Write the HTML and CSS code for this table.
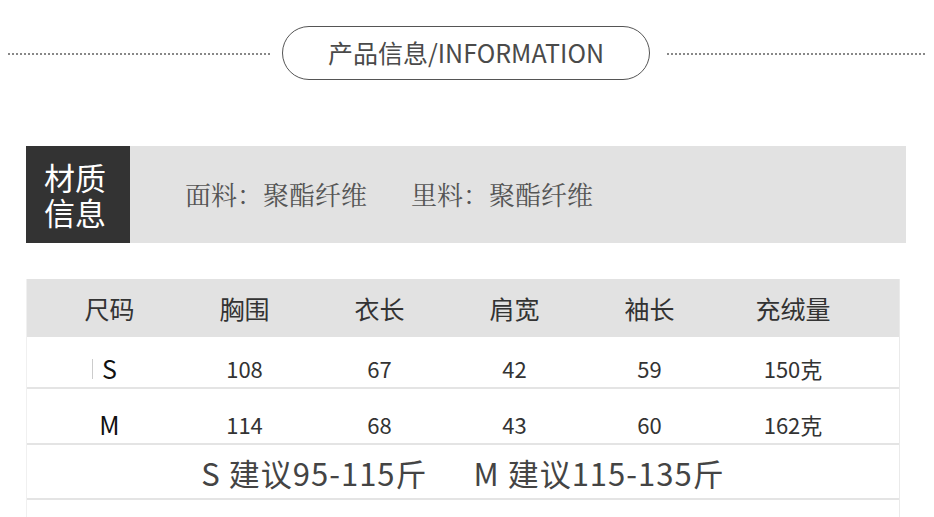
FILE: index.html
```html
<!DOCTYPE html>
<html lang="zh">
<head>
<meta charset="utf-8">
<link rel="stylesheet" href="styles.css">
</head>
<body>
<div class="top">
  <div class="dots dots-left"></div>
  <div class="pill">产品信息/INFORMATION</div>
  <div class="dots dots-right"></div>
</div>
<div class="material">
  <div class="mat-label"><div>材质</div><div>信息</div></div>
  <div class="mat-text"><span>面料：聚酯纤维</span><span>里料：聚酯纤维</span></div>
</div>
<div class="table">
  <div class="row head">
    <div>尺码</div><div>胸围</div><div>衣长</div><div>肩宽</div><div>袖长</div><div>充绒量</div>
  </div>
  <div class="row data data-s">
    <div class="size"><span class="tick"></span>S</div><div>108</div><div>67</div><div>42</div><div>59</div><div>150克</div>
  </div>
  <div class="row data data-m">
    <div class="size">M</div><div>114</div><div>68</div><div>43</div><div>60</div><div>162克</div>
  </div>
  <div class="rec">
    <span>S 建议95-115斤</span><span>M 建议115-135斤</span>
  </div>
  <div class="tail"></div>
</div>
</body>
</html>
```
FILE: styles.css
```css
* { box-sizing: border-box; }
html, body { margin: 0; padding: 0; background: #fff; }
body {
  width: 934px;
  height: 517px;
  overflow: hidden;
  font-family: "Noto Sans CJK SC", "Noto Sans", sans-serif;
  color: #333;
}
.top {
  height: 106px;
  display: flex;
  align-items: center;
  padding-left: 8px;
}
.dots {
  height: 0;
  border-top: 2px dotted #888;
  margin-top: 2px;
}
.dots-left { width: 262px; }
.dots-right { width: 258px; margin-left: 17px; }
.pill {
  margin-left: 12px;
  width: 368px;
  height: 54px;
  border: 1.5px solid #555;
  border-radius: 27px;
  display: flex;
  align-items: center;
  justify-content: center;
  font-size: 25px;
  color: #4a4a4a;
  padding-bottom: 3px;
}
.material {
  margin-top: 40px;
  margin-left: 26px;
  width: 880px;
  height: 97px;
  display: flex;
  background: #e2e2e2;
}
.mat-label {
  width: 104px;
  background: #333;
  color: #fff;
  font-size: 31px;
  line-height: 35px;
  display: flex;
  flex-direction: column;
  justify-content: center;
  padding-left: 18px;
  padding-bottom: 2px;
}
.mat-label div { height: 35px; }
.mat-text {
  display: flex;
  align-items: center;
  gap: 44px;
  padding-left: 55px;
  font-size: 26px;
  color: #555;
  font-family: "Noto Serif CJK SC", "Noto Sans CJK SC", serif;
  padding-bottom: 2px;
}
.table {
  margin-top: 36px;
  margin-left: 26px;
  width: 874px;
  border-left: 1px solid #f0f0f0;
  border-right: 1px solid #eaeaea;
}
.row {
  display: grid;
  grid-template-columns: 135px 135px 135px 135px 135px 152px;
  padding-left: 15px;
  align-items: center;
  text-align: center;
}
.head {
  height: 58px;
  background: #e2e2e2;
  font-size: 25px;
  color: #333;
  padding-top: 0px;
}
.data {
  border-bottom: 2px solid #e4e4e4;
  font-size: 22px;
  color: #333;
}
.data-s { height: 52px; padding-top: 12px; }
.data-m { height: 56px; padding-top: 16px; }
.data .size {
  font-size: 25px;
  color: #111;
  position: relative;
}
.tick {
  position: absolute;
  left: 50px;
  top: 9px;
  width: 1px;
  height: 20px;
  background: #ccc;
}
.rec {
  height: 55px;
  border-bottom: 2px solid #e4e4e4;
  display: flex;
  justify-content: center;
  align-items: center;
  gap: 46px;
  font-size: 31px;
  letter-spacing: 1px;
  color: #444;
  padding-left: 0px;
  padding-top: 2px;
}
.tail { height: 30px; }
```
